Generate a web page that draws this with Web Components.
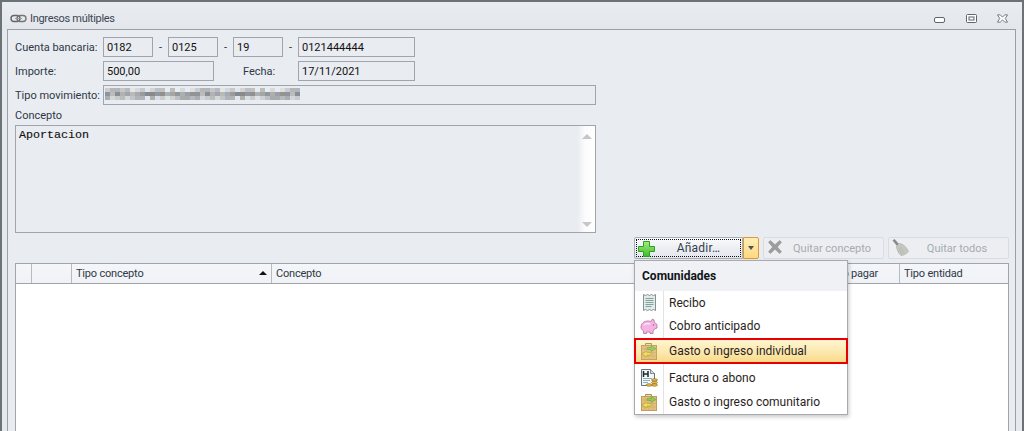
<!DOCTYPE html>
<html lang="es">
<head>
<meta charset="utf-8">
<title>Ingresos múltiples</title>
<style>
html, body { margin: 0; height: 100%; overflow: hidden; background: #fff; }
body { font: 11px Roboto, "Liberation Sans", sans-serif; color: #1e2a3a; }
</style>
</head>
<body>
<ingresos-window>
  <form-row>
    <form-label width="88">Cuenta bancaria:</form-label>
    <text-box width="50">0182</text-box><dash-sep></dash-sep>
    <text-box width="50">0125</text-box><dash-sep></dash-sep>
    <text-box width="50">19</text-box><dash-sep></dash-sep>
    <text-box width="117">0121444444</text-box>
  </form-row>
  <form-row>
    <form-label width="88">Importe:</form-label>
    <text-box width="111">500,00</text-box>
    <form-label width="84" indent="29">Fecha:</form-label>
    <text-box width="117">17/11/2021</text-box>
  </form-row>
  <form-row>
    <form-label width="88">Tipo movimiento:</form-label>
    <text-box width="493"><mosaic-text></mosaic-text></text-box>
  </form-row>
  <memo-box label="Concepto">Aportacion</memo-box>
  <tool-bar>
    <split-button>
      <add-menu slot="menu"></add-menu>
    </split-button>
    <flat-button width="121" icon="x">Quitar concepto</flat-button>
    <flat-button width="121" icon="broom">Quitar todos</flat-button>
  </tool-bar>
  <grid-table></grid-table>
</ingresos-window>

<script>
// icons shared by the menu and the buttons
const GASTO = `<svg width="16" height="18" viewBox="0 0 16 18"><path d="M4.500 4V1.500h6V4" fill="#efdcb4" stroke="#b08a4c"/><rect x=".5" y="3.500" width="15" height="14" fill="#e2c07e" stroke="#c09a58"/><path d="M.5 7h15M.5 10.500h15M.5 14h15M4 3.500v14M8 3.500v14M12 3.500v14" stroke="#d2ae6c" stroke-width=".8"/><path d="M6 5.500h4V3.500l5 3-5 3v-2H6z" fill="#8ccc54" stroke="#6a9c3e" stroke-width=".5"/><path d="M10 10.500H6V9l-5 3 5 3v-2h4z" fill="#f2dc54" stroke="#ab9434" stroke-width=".5"/></svg>`;
const ICONS = {
  link: `<svg width="17" height="9" viewBox="0 0 17 9"><rect x="1" y="1.500" width="9" height="6" rx="3" fill="none" stroke="#666" stroke-width="1.400"/><rect x="7" y="1.500" width="9" height="6" rx="3" fill="none" stroke="#777" stroke-width="1.400"/><path d="M5 4.500h7" stroke="#999"/></svg>`,
  plus: `<svg width="17" height="16" viewBox="0 0 17 16"><defs><linearGradient id="g" x1="0" y1="0" x2="0" y2="1"><stop offset="0" stop-color="#a4ec7c"/><stop offset="1" stop-color="#3cbd2c"/></linearGradient></defs><path d="M5.500.5h6v5h5v5h-5v5h-6v-5h-5v-5h5z" fill="url(#g)" stroke="#2f9f24"/></svg>`,
  x: `<svg width="14" height="14" viewBox="0 0 15 15"><path d="M2.500 0.500L7.500 5 12.500 0.500 14.500 2.500 10 7.500 14.500 12.500 12.500 14.500 7.500 10 2.500 14.500 0.500 12.500 5 7.500 0.500 2.500z" fill="#9c9c9c" stroke="#8a8a8a" stroke-width=".5"/></svg>`,
  broom: `<svg width="17" height="17" viewBox="0 0 17 17"><path d="M.5 1.500L2.500 0 7 5 5 7z" fill="#8a8a86"/><path d="M4.500 7L7.500 4.500c3.500.5 7 3.500 9 8-2.500 2.500-5 4-7.500 4C6 14 4.500 10 4.500 7z" fill="#c6c6c0" stroke="#a9a9a5" stroke-width=".6"/><path d="M8 8l4 6M7 9l2.500 6" stroke="#aeaea8" stroke-width=".6"/></svg>`,
  recibo: `<svg width="13" height="17" viewBox="0 0 13 17"><path d="M.5.500l2 1 2-1 2 1 2-1 2 1 2-1v16l-2-1-2 1-2-1-2 1-2-1-2 1z" fill="#e4eaea" stroke="#7a8486" stroke-width=".9"/><path d="M2.500 4.500h8M2.500 6.500h8M2.500 8.500h8M2.500 10.500h8M2.500 12.500h6" stroke="#7ba3a0" stroke-width="1.100"/></svg>`,
  pig: `<svg width="18" height="16" viewBox="0 0 18 16"><path d="M1 9c0-3.500 3-6 7-6 1 0 2 .2 3 .5l1.500-2.500 1.500 1 .5 2.500L17 6.500V10l-2.500 1c-.5 1-1 1.500-1.500 2v2.500h-3V14H6.500v1.500h-3V13C2 12 1 11 1 9z" fill="#f4b4e2" stroke="#bc78ac" stroke-width=".9"/><path d="M4 7q3-2.500 6-1" fill="none" stroke="#fde6f6" stroke-width="1.400"/><circle cx="13.500" cy="7" r=".8" fill="#a85c96"/></svg>`,
  gasto: GASTO,
  factura: `<svg width="17" height="18" viewBox="0 0 17 18"><path d="M.5.500h9l4 4v12H.5z" fill="#f4f7f8" stroke="#66727a"/><path d="M9.500.5v4h4" fill="#d5dde0" stroke="#66727a" stroke-width=".8"/><path d="M2 9.500h9M2 11.500h7M2 13.500h5" stroke="#8fb0bd"/><path d="M2.500 2v6M7 2v6M2.500 5H7" stroke="#1d2a34" stroke-width="1.500"/><ellipse cx="13.500" cy="11" rx="3" ry="1.300" fill="#e0b84e" stroke="#8c6a1c" stroke-width=".6"/><ellipse cx="13.500" cy="13.500" rx="3" ry="1.300" fill="#e0b84e" stroke="#8c6a1c" stroke-width=".6"/><ellipse cx="13.500" cy="16" rx="3" ry="1.300" fill="#e0b84e" stroke="#8c6a1c" stroke-width=".6"/><ellipse cx="8" cy="16" rx="3" ry="1.300" fill="#e0b84e" stroke="#8c6a1c" stroke-width=".6"/></svg>`
};

// small helper so every element is a shadow root with its own styles
function defineEl(name, css, html, setup) {
  customElements.define(name, class extends HTMLElement {
    constructor() {
      super();
      this.attachShadow({ mode: 'open' });
    }
    connectedCallback() {
      if (this.shadowRoot.childNodes.length) return;
      this.shadowRoot.innerHTML = `<style>${css}</style>${typeof html === 'function' ? html(this) : html}`;
      if (setup) setup(this);
    }
  });
}

defineEl('ingresos-window', `
  :host { display: flex; flex-direction: column; box-sizing: border-box; height: 431px; width: 1024px;
    background: linear-gradient(#e9ecf0, #e3e6ea 28px, #e6e9ee 29px); border: 2px solid #6b7278; border-bottom: 0; }
  .title { flex: none; height: 27px; box-sizing: border-box; padding: 5px 0 0 8px; display: flex; align-items: center; gap: 3px; color: #3b4654; }
  .title span { flex: 1; letter-spacing: -.3px; }
  .title svg { flex: none; }
  .btns { display: flex; align-items: center; gap: 20px; padding-right: 14px; }
  .body { flex: 1; margin: 0 6px 0 5px; border: 1px solid #9aa0a8; border-bottom: 0; padding: 7px 6px 0 7px; background: #e9ecf1; position: relative; }
`, () => `
  <div class="title">${ICONS.link}<span>Ingresos múltiples</span>
    <div class="btns">
      <svg width="11" height="6" viewBox="0 0 11 6" style="margin:4px 1px 0 0"><rect x=".5" y=".5" width="10" height="5" rx="1.500" fill="#fff" stroke="#5d656e"/></svg>
      <svg width="11" height="9" viewBox="0 0 11 9"><rect x=".5" y=".5" width="10" height="8" rx="1" fill="#fff" stroke="#5d656e"/><rect x="3" y="3" width="5" height="3" fill="#fff" stroke="#5d656e"/></svg>
      <svg width="11" height="9" viewBox="0 0 12 9"><path d="M.5.500h3L6 3 8.500.500h3L9 4.500l2.500 4h-3L6 6 3.500 8.500h-3L3 4.500z" fill="#fff" stroke="#5d656e" stroke-width=".9"/></svg>
    </div>
  </div>
  <div class="body"><slot></slot></div>`);

defineEl('form-row', `:host { display: flex; align-items: center; height: 20px; margin-bottom: 4px; }`, `<slot></slot>`);

defineEl('form-label', `:host { display: block; box-sizing: border-box; white-space: nowrap; color: #2e3846; }`, `<slot></slot>`, el => {
  el.style.width = el.getAttribute('width') + 'px';
  el.style.paddingLeft = (el.getAttribute('indent') || 0) + 'px';
});

defineEl('text-box', `:host { display: flex; align-items: center; box-sizing: border-box; height: 20px; border: 1px solid #a0a5ad;
  padding: 0 3px; background: #e9ecf0; color: #111; white-space: nowrap; overflow: hidden; }`, `<slot></slot>`, el => {
  el.style.width = el.getAttribute('width') + 'px';
});

defineEl('dash-sep', `:host { display: block; width: 15px; text-align: center; color: #333; }`, `-`);

// the censored text of the reference: a mosaic of grey cells
defineEl('mosaic-text', `:host { display: block; line-height: 0; margin: 0 0 2px -2px; } svg { display: block; }`, () => {
  const col = [165, 150, 185, 160, 195, 155, 175, 145, 190, 170, 150, 180, 200, 160, 145, 175, 155, 185];
  const tints = [[0, 2, 12], [8, 6, 0], [-2, 6, 14], [4, 4, 4], [-4, 4, 12], [6, 4, 2]];
  const rowGain = [1.22, 0.92, 1.14];
  let rects = '';
  for (let x = 0, i = 0; x < 195; x += 5, i++) {
    for (let r = 0; r < 3; r++) {
      const base = Math.min(232, col[(i * 7 + r * 5) % 18] * rowGain[r]);
      const t = tints[(i + r * 2) % 6];
      rects += `<rect x="${x}" y="${r * 4}" width="5" height="4" fill="rgb(${(base + t[0]) | 0},${(base + t[1]) | 0},${(base + t[2]) | 0})"/>`;
    }
  }
  return `<svg width="195" height="12">${rects}</svg>`;
});

defineEl('memo-box', `
  :host { display: block; }
  .lbl { height: 14px; line-height: 14px; color: #2e3846; }
  .box { height: 108px; margin-top: 2px; width: 581px; box-sizing: border-box; border: 1px solid #a0a5ad; background: #e9ecf1; display: flex; }
  .txt { flex: 1; font: 11.67px "Liberation Mono", monospace; color: #111; padding: 2px 3px; -webkit-text-stroke: .15px #111; }
  .bar { width: 17px; background: linear-gradient(90deg, #ecedf0, #fbfbfc 40%, #fff); display: flex; flex-direction: column; justify-content: space-between; align-items: center; padding: 8px 0 5px; box-sizing: border-box; }
  .up { border: 5px solid transparent; border-top: 0; border-bottom: 5px solid #c4c6ca; }
  .dn { border: 5px solid transparent; border-bottom: 0; border-top: 5px solid #c4c6ca; }
`, el => `<div class="lbl">${el.getAttribute('label')}</div><div class="box"><div class="txt"><slot></slot></div><div class="bar"><div class="up"></div><div class="dn"></div></div></div>`);

defineEl('tool-bar', `:host { display: flex; justify-content: flex-end; gap: 4px; height: 22px; margin-top: 4px; position: relative; }`, `<slot></slot>`);

defineEl('split-button', `
  :host { display: flex; height: 22px; position: relative; }
  .main { width: 109px; box-sizing: border-box; border: 1px solid #a9aeb6; border-radius: 2px 0 0 2px; background: linear-gradient(#fbfcfd, #eceef2 50%, #e4e7ec); position: relative; padding: 1px; }
  .focus { height: 100%; box-sizing: border-box; border: 1px dotted #111; display: flex; align-items: center; justify-content: center; color: #333e4e; padding-left: 20px; font-size: 12px; letter-spacing: .2px; }
  svg { position: absolute; left: 3px; top: 3px; }
  .drop { width: 16px; box-sizing: border-box; border: 1px solid #d99a3e; border-radius: 0 2px 2px 0; background: linear-gradient(#ffeeb5, #ffd97e); display: flex; align-items: center; justify-content: center; }
  .drop i { border: 3.500px solid transparent; border-bottom: 0; border-top: 4px solid #4a5260; }
  ::slotted(*) { position: absolute; left: 0; top: 23px; }
`, `<div class="main">${ICONS.plus}<div class="focus">Añadir…</div></div><div class="drop"><i></i></div><slot name="menu"></slot>`);

defineEl('flat-button', `
  :host { display: flex; align-items: center; justify-content: center; box-sizing: border-box; height: 22px; position: relative;
    border: 1px solid #d9dce1; border-radius: 2px; background: #eceef2; color: #a7abb0; padding-left: 17px; }
  svg { position: absolute; left: 4px; top: 2px; }
  :host([icon="broom"]) svg { left: 3px; top: 1px; }
`, el => `${ICONS[el.getAttribute('icon')]}<slot></slot>`, el => {
  el.style.width = el.getAttribute('width') + 'px';
});

defineEl('add-menu', `
  :host { display: block; width: 214px; box-sizing: border-box; background: #fff; border: 1px solid #a6a9ae; box-shadow: 1px 2px 4px rgba(0,0,0,.22); z-index: 5; color: #2a1e22; font-size: 12px; }
  .head { height: 30px; line-height: 31px; padding-left: 7px; background: #eff1f5; font-weight: 700; color: #101418; }
  .items { position: relative; }
  .items::before { content: ""; position: absolute; left: 28px; top: 0; bottom: 0; width: 1px; background: #e2e3e6; }
  .item { display: flex; align-items: center; height: 23px; position: relative; }
  .ic { width: 28px; flex: none; display: flex; justify-content: center; align-items: center; }
  .t { margin-left: 6px; }
  .sel { background: linear-gradient(#fff7d6, #fce8ae 55%, #f8d77f); outline: 2px solid #e80000; outline-offset: -2px; height: 26px; width: 214px; margin-left: -1px; padding-left: 1px; box-sizing: border-box; z-index: 1; }
  .sel .ic { opacity: .9; }
  .gap { height: 2px; }
  .tall { height: 24px; }
`, `
  <div class="head">Comunidades</div>
  <div class="items">
    <div class="item"><div class="ic">${ICONS.recibo}</div><span class="t">Recibo</span></div>
    <div class="item tall"><div class="ic">${ICONS.pig}</div><span class="t">Cobro anticipado</span></div>
    <div class="item sel"><div class="ic">${ICONS.gasto}</div><span class="t">Gasto o ingreso individual</span></div>
    <div class="gap"></div>
    <div class="item tall"><div class="ic">${ICONS.factura}</div><span class="t">Factura o abono</span></div>
    <div class="item tall"><div class="ic">${ICONS.gasto}</div><span class="t">Gasto o ingreso comunitario</span></div>
  </div>`);

defineEl('grid-table', `
  :host { display: block; margin-top: 4px; border: 1px solid #a0a5ad; border-bottom: 0; height: 170px; background: #fff; }
  .head { display: flex; box-sizing: border-box; height: 20px; background: linear-gradient(#f5f6f9, #f0f2f6); border-bottom: 1px solid #a0a5ad; color: #2e3846; letter-spacing: -.2px; }
  .c { box-sizing: border-box; border-right: 1px solid #b6bac1; padding-left: 4px; line-height: 19px; white-space: nowrap; position: relative; overflow: hidden; }
  .sort { position: absolute; right: 4px; top: 7px; border: 4px solid transparent; border-top: 0; border-bottom: 4px solid #111; }
`, `<div class="head">
    <div class="c" style="width:16px"></div>
    <div class="c" style="width:40px"></div>
    <div class="c" style="width:200px">Tipo concepto<i class="sort"></i></div>
    <div class="c" style="flex:1">Concepto</div>
    <div class="c" style="width:83px">Modo pagar</div>
    <div class="c" style="width:108px;border-right:0">Tipo entidad</div>
  </div>`);
</script>
</body>
</html>
